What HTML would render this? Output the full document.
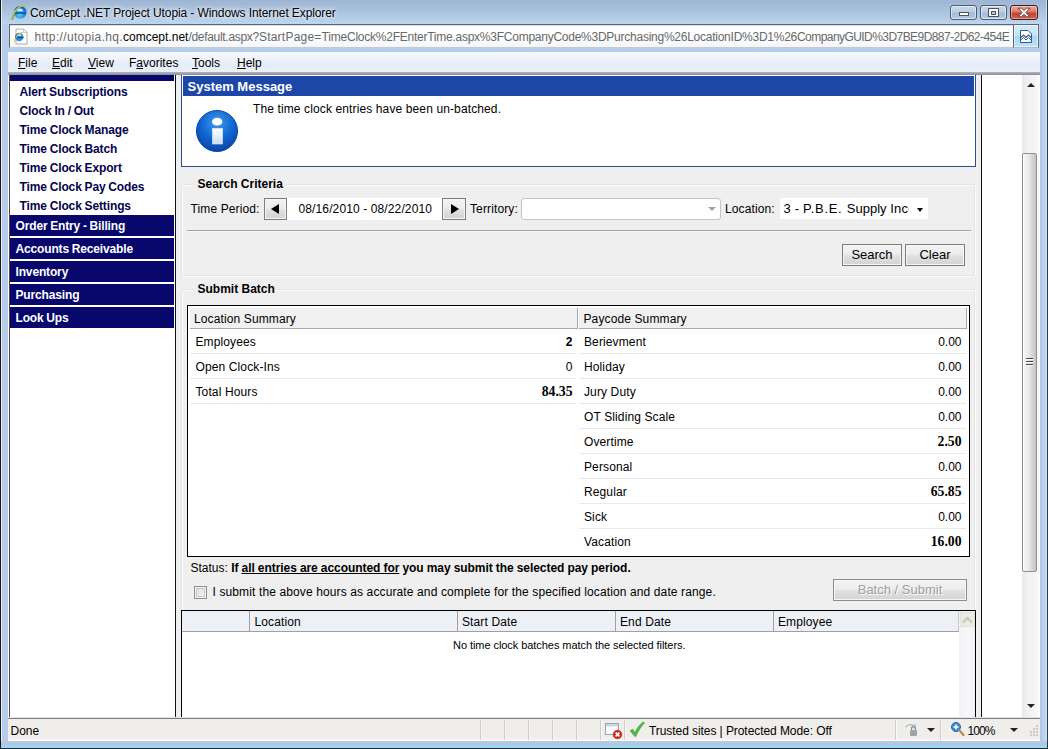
<!DOCTYPE html>
<html>
<head>
<meta charset="utf-8">
<title>ComCept .NET Project Utopia - Windows Internet Explorer</title>
<style>
html,body{margin:0;padding:0;}
body{width:1048px;height:749px;overflow:hidden;position:relative;background:#b4cbe5;font-family:"Liberation Sans",sans-serif;font-size:12px;color:#000;}
.a{position:absolute;}
.t{position:absolute;white-space:nowrap;line-height:16px;}
.b{font-weight:bold;}
/* window chrome */
#win{left:0;top:0;width:1048px;height:749px;background:linear-gradient(#9db5d2 0,#abc3de 12px,#b8d0ea 21px,#bcd6f0 23px,#b6cfea 48px,#b4cbe6 52px,#b7cde8 74px,#b9d0ea 100%);}
#edgeL{left:0;top:0;width:1px;height:749px;background:#14181c;}
#edgeL2{left:1px;top:0;width:1px;height:747px;background:#e6f2fb;}
#edgeR{left:1047px;top:0;width:1px;height:749px;background:#2c3a47;}
#edgeR2{left:1046px;top:0;width:1px;height:748px;background:#cfe6f7;}
#edgeB{left:0;top:748px;width:1048px;height:1px;background:#20282f;}
#edgeB2{left:1px;top:741px;width:1046px;height:7px;background:linear-gradient(#b6cbe0 0,#b0c8e2 60%,#92def5 80%,#8fdff6 100%);}
.ui{font-family:"Liberation Sans",sans-serif;font-size:12px;}
/* page */
#page{left:9px;top:75px;width:1030px;height:642px;background:#fff;overflow:hidden;}
.nav{position:absolute;left:11px;white-space:nowrap;font-weight:bold;font-size:12px;line-height:16px;color:#04044e;letter-spacing:-.120px;word-spacing:-.400px;}
.bar{letter-spacing:-.150px;word-spacing:-.400px;position:absolute;left:1px;width:164px;height:21px;background:#07076c;color:#fff;font-weight:bold;font-size:12px;line-height:21px;white-space:nowrap;}
.bar span{position:absolute;left:5.500px;top:1px;}
.row{position:absolute;height:1px;background:#e9e9e9;}
.c{position:absolute;white-space:nowrap;font-size:12px;line-height:16px;letter-spacing:.120px;}
.v{position:absolute;white-space:nowrap;font-size:12px;line-height:16px;text-align:right;width:60px;}
.vb{position:absolute;white-space:nowrap;font-family:"Liberation Serif",serif;font-weight:bold;font-size:13.700px;line-height:16px;text-align:right;width:60px;}
.btn{position:absolute;box-sizing:border-box;border:1px solid #7c7c7c;background:linear-gradient(#f3f3f3 0,#ececec 45%,#e0e0e0 55%,#d3d3d3 100%);box-shadow:inset 0 0 0 1px #f6f6f6;font-size:13px;line-height:20.500px;text-align:center;white-space:nowrap;}
.sep{position:absolute;top:3px;width:1px;height:20px;background:#cfcdcb;box-shadow:1px 0 0 #faf9f8;}
.fs{box-sizing:border-box;border:1px solid;border-color:#e4e4e4 #fcfcfc #fcfcfc #e4e4e4;border-radius:3px;}
.fs>div{position:absolute;left:0;top:0;right:0;bottom:0;border:1px solid;border-color:#fcfcfc #e4e4e4 #e4e4e4 #fcfcfc;border-radius:2px;}
</style>
</head>
<body>
<div id="win" class="a"></div>
<div id="edgeL2" class="a"></div><div id="edgeL" class="a"></div>
<div id="edgeR2" class="a"></div><div id="edgeR" class="a"></div>
<div id="edgeB2" class="a"></div><div id="edgeB" class="a"></div>

<!-- TITLEBAR -->
<div id="titlebar" class="a" style="left:0;top:0;width:1048px;height:24px;">
<svg class="a" style="left:9px;top:2px" width="20" height="19" viewBox="0 0 20 19">
<defs><radialGradient id="ieg" cx="0.45" cy="0.7" r="0.7"><stop offset="0" stop-color="#4fd2fa"/><stop offset="0.55" stop-color="#1f8fe0"/><stop offset="1" stop-color="#1256b0"/></radialGradient></defs>
<circle cx="11.200" cy="10.200" r="6.300" fill="url(#ieg)"/>
<path d="M5.500 10.300h11.500v1.500H5.500z" fill="#0f4fa6"/>
<path d="M8.200 9.300c.3-1.700 1.500-2.700 3-2.700s2.700 1 3 2.700z" fill="#e6f6fe" opacity=".9"/>
<path d="M17.800 3C13 .6 3.200 8 2.300 16.600c.4 1 1.500.8 1.800 0C4.300 10.500 11 3.700 17.800 3z" fill="#c9c741"/>
<path d="M2.300 16.600c.4 1 1.500.8 1.800 0 0-1.600.5-3.400 1.500-5.200" fill="none" stroke="#7a6a22" stroke-width=".7"/>
</svg>
<div id="ttl" class="t ui" style="left:30px;top:5px;font-size:12px;letter-spacing:-0.1px;color:#000;text-shadow:0 0 6px #fff,0 0 3px #e8f0f8;">ComCept .NET Project Utopia - Windows Internet Explorer</div>
<!-- caption buttons -->
<div class="a" style="left:950px;top:5px;width:27px;height:15px;border:1px solid #4d5c72;border-radius:3px;box-sizing:border-box;background:linear-gradient(#c9d8ea 0,#b9cde3 48%,#a3bbd8 52%,#b4cbe3 100%);box-shadow:inset 0 0 0 1px rgba(255,255,255,.55);"></div>
<div class="a" style="left:959px;top:12px;width:10px;height:4px;box-sizing:border-box;border:1px solid #4a5563;background:#fff;"></div>
<div class="a" style="left:980px;top:5px;width:27px;height:15px;border:1px solid #4d5c72;border-radius:3px;box-sizing:border-box;background:linear-gradient(#c9d8ea 0,#b9cde3 48%,#a3bbd8 52%,#b4cbe3 100%);box-shadow:inset 0 0 0 1px rgba(255,255,255,.55);"></div>
<div class="a" style="left:988px;top:8px;width:11px;height:9px;box-sizing:border-box;border:1px solid #4a5563;background:#fff;"></div>
<div class="a" style="left:991px;top:11px;width:5px;height:4px;box-sizing:border-box;border:1px solid #4a5563;background:#b7cbe2;"></div>
<div class="a" style="left:1010px;top:5px;width:28px;height:15px;border:1px solid #43191a;border-radius:3px;box-sizing:border-box;background:linear-gradient(#e3a79a 0,#d67b6b 48%,#c4412b 52%,#d2634a 100%);box-shadow:inset 0 0 0 1px rgba(255,255,255,.4);"></div>
<svg class="a" style="left:1017px;top:7px" width="14" height="11" viewBox="0 0 14 11"><path d="M1.200 1.200h3.400L7 3.700 9.400 1.200h3.400L8.900 5.400l3.900 4.400H9.400L7 7.200 4.600 9.800H1.200l3.900-4.400z" fill="#fff" stroke="#6a3a35" stroke-width=".9" stroke-linejoin="round"/></svg>
</div>
<!-- ADDRESSBAR -->
<div id="addrbar" class="a" style="left:9px;top:24px;width:1030px;height:25px;">
<div class="a" style="left:0;top:0;width:1005px;height:24px;box-sizing:border-box;border:1px solid #5b6670;border-bottom-color:#c3cad2;border-right:none;background:linear-gradient(#fff 40%,#f3f6f9);box-shadow:inset 0 1px 0 #dde3e9;"></div>
<div class="a" style="left:1004px;top:0;width:26px;height:24px;box-sizing:border-box;border:1px solid #5b6670;border-bottom-color:#a9bccb;background:linear-gradient(#d4ecf9 0,#c1e4f6 48%,#a5d8f2 52%,#bfe4f5 100%);box-shadow:inset 0 0 0 1px rgba(255,255,255,.6);"></div>
<svg class="a" style="left:1011px;top:6px" width="12" height="13" viewBox="0 0 12 13"><path d="M.5.500h7.500l3.500 3.500v8.500H.5z" fill="#fff" stroke="#2f5f8f" stroke-width="1"/><path d="M.8 7.500l2.700-2.500 2.500 2.500 2.500-2.500 2.700 2.500" fill="none" stroke="#2f5f8f" stroke-width="1.200"/><path d="M1 12V9.500l2.500-2 2.500 2.200 2.500-2.200 2.500 2V12z" fill="#f4fafd"/><path d="M.8 10l2.700-2.500 2.500 2.500 2.500-2.500 2.700 2.500" fill="none" stroke="#2f5f8f" stroke-width="1"/></svg>
<svg class="a" style="left:5px;top:4px" width="16" height="17" viewBox="0 0 16 17"><path d="M2 1h7.500l3.500 3.500V16H2z" fill="#fff" stroke="#b9a9a0" stroke-width="1"/><path d="M9.500 1v3.500H13" fill="none" stroke="#c9bdb6" stroke-width=".8"/><circle cx="5.200" cy="9" r="4.300" fill="#2a8fe2"/><path d="M1 8.800h8.500v1.400H1z" fill="#0f4fa6"/><path d="M3 8c.3-1.200 1.100-1.900 2.200-1.900S7.100 6.800 7.400 8z" fill="#e6f6fe" opacity=".9"/><path d="M9.800 4.200C6.500 3 .8 8 .2 13.500c.3.700 1.100.6 1.300 0C1.700 9.500 5.500 5 9.800 4.200z" fill="#d1c23c"/></svg>
<div id="adr" class="t ui" style="left:25.500px;top:5px;font-size:12px;color:#686868;"><span id="adr1" style="letter-spacing:.340px">http://utopia.hq.</span><span id="adr2" style="color:#000">comcept.net</span><span id="adr3" style="letter-spacing:-.300px">/default.aspx?<span id="q1" style="letter-spacing:.230px">StartPage=</span><span id="q2" style="letter-spacing:-.220px">TimeClock</span><span id="q3" style="letter-spacing:-.250px">%2FEnterTime.aspx%3F</span><span id="q4" style="letter-spacing:-.250px">CompanyCode%3D<span id="q4a">Purchasing%26</span><span id="q4b">LocationID%3D1%26</span></span><span id="q5" style="letter-spacing:-.560px">CompanyGUID%3D<span id="q5a">7BE9D887-2D62-454E</span></span></span></div>
</div>
<!-- MENUBAR -->
<div id="menubar" class="a" style="left:8px;top:52px;width:1032px;height:20px;background:linear-gradient(#f8fafd 0,#eef3fa 35%,#e6edf8 65%,#eaf0f9 100%);">
<div id="m1" class="t ui" style="left:10px;top:3px;"><u>F</u>ile</div>
<div id="m2" class="t ui" style="left:44px;top:3px;"><u>E</u>dit</div>
<div id="m3" class="t ui" style="left:80px;top:3px;"><u>V</u>iew</div>
<div id="m4" class="t ui" style="left:121px;top:3px;">F<u>a</u>vorites</div>
<div id="m5" class="t ui" style="left:184px;top:3px;"><u>T</u>ools</div>
<div id="m6" class="t ui" style="left:229px;top:3px;"><u>H</u>elp</div>
</div>
<div class="a" style="left:8px;top:72px;width:1032px;height:3px;background:linear-gradient(#b4b6be,#8a8c98);"></div>
<!-- PAGE -->
<div class="a" style="left:1040px;top:24px;width:6px;height:717px;background:linear-gradient(90deg,#b4c6e6 0,#b4c6e6 2px,#b5d4ee 2px,#b9d7f0 100%);"></div>
<div class="a" style="left:2px;top:24px;width:6px;height:717px;background:linear-gradient(90deg,#b9cdea 0,#b5cbe9 4px,#b7cbe6 100%);"></div>
<div id="page" class="a" style="left:8px;top:75px;width:1032px;height:642px;background:#fff;"></div>
<div id="pg" class="a" style="left:0;top:0;width:1048px;height:717px;overflow:hidden;">
<!-- sidebar -->
<div class="a" style="left:9px;top:75px;width:1px;height:642px;background:#4a4a4a;"></div>
<div class="a" style="left:10px;top:75px;width:164px;height:6px;background:#07076c;"></div>
<div id="n1" class="nav" style="left:19.500px;top:84px;">Alert Subscriptions</div>
<div id="n2" class="nav" style="left:19.500px;top:103px;">Clock In / Out</div>
<div id="n3" class="nav" style="left:19.500px;top:122px;">Time Clock Manage</div>
<div id="n4" class="nav" style="left:19.500px;top:141px;">Time Clock Batch</div>
<div id="n5" class="nav" style="left:19.500px;top:160px;">Time Clock Export</div>
<div id="n6" class="nav" style="left:19.500px;top:179px;">Time Clock Pay Codes</div>
<div id="n7" class="nav" style="left:19.500px;top:198px;">Time Clock Settings</div>
<div class="bar" style="left:10px;top:215px;"><span id="b1">Order Entry - Billing</span></div>
<div class="bar" style="left:10px;top:238px;"><span id="b2">Accounts Receivable</span></div>
<div class="bar" style="left:10px;top:261px;"><span id="b3">Inventory</span></div>
<div class="bar" style="left:10px;top:284px;"><span id="b4">Purchasing</span></div>
<div class="bar" style="left:10px;top:307px;"><span id="b5">Look Ups</span></div>
<div class="a" style="left:175px;top:75px;width:1px;height:642px;background:#111;"></div>
<!-- main frame -->
<div id="main" class="a" style="left:176px;top:75px;width:805px;height:642px;background:#efefef;"></div>
<div class="a" style="left:981px;top:75px;width:1px;height:642px;background:#111;"></div>
<!-- system message -->
<div class="a" style="left:181px;top:75px;width:795px;height:92px;box-sizing:border-box;border:1px solid #2d4f8e;border-top:none;background:#fff;"></div>
<div class="a" style="left:183px;top:76px;width:791px;height:20px;background:#1c47a8;"></div>
<div id="sm" class="t b" style="left:187.500px;top:79px;font-size:13px;color:#fff;">System Message</div>
<svg class="a" style="left:194px;top:108px" width="46" height="46" viewBox="0 0 46 46">
<defs><radialGradient id="ig" cx="0.5" cy="0.3" r="0.75"><stop offset="0" stop-color="#3f9bf0"/><stop offset="0.55" stop-color="#0f63cf"/><stop offset="1" stop-color="#0a3f9e"/></radialGradient>
<linearGradient id="ig2" x1="0" y1="0" x2="0" y2="1"><stop offset="0" stop-color="#fff"/><stop offset="1" stop-color="#c9dcf2"/></linearGradient></defs>
<circle cx="23" cy="23" r="20.500" fill="url(#ig)" stroke="#0b47a6" stroke-width="1"/>
<ellipse cx="23.200" cy="13.700" rx="5.200" ry="3.900" fill="#fff"/>
<rect x="18.500" y="20.500" width="10" height="15.500" fill="url(#ig2)" stroke="#e8f0fb" stroke-width=".6"/>
</svg>
<div id="msg" class="c" style="left:253px;top:101px;">The time clock entries have been un-batched.</div>
<!-- fieldset 1 -->
<div class="a fs" style="left:181px;top:184px;width:795px;height:93px;"><div></div></div>
<div class="a" style="left:193px;top:178px;width:93px;height:12px;background:#efefef;"></div>
<div id="lg1" class="t b" style="left:197.500px;top:175.500px;">Search Criteria</div>
<div id="tp" class="c" style="left:190.500px;top:201px;">Time Period:</div>
<div class="a" style="left:287px;top:198px;width:156px;height:22px;background:#fff;"></div>
<div class="btn" style="left:264px;top:198px;width:23px;height:22px;"></div>
<div class="a" style="left:271px;top:204px;width:0;height:0;border:5px solid transparent;border-right:8px solid #000;border-left:none;"></div>
<div id="dt" class="c" style="left:298.500px;top:201px;">08/16/2010 - 08/22/2010</div>
<div class="btn" style="left:442px;top:198px;width:24px;height:22px;"></div>
<div class="a" style="left:451px;top:204px;width:0;height:0;border:5px solid transparent;border-left:8px solid #000;border-right:none;"></div>
<div id="ter" class="c" style="left:470px;top:201px;">Territory:</div>
<div class="a" style="left:521px;top:198px;width:200px;height:22px;box-sizing:border-box;border:1px solid #c4c4c4;border-radius:3px;background:#fff;"></div>
<div class="a" style="left:708px;top:207px;width:0;height:0;border:4px solid transparent;border-top:4px solid #a0a0a0;border-bottom:none;"></div>
<div id="loc" class="c" style="left:725px;top:201px;">Location:</div>
<div class="a" style="left:780px;top:198px;width:148px;height:21px;background:#fff;"></div>
<div id="sel" class="c" style="left:783.500px;top:201px;font-size:13px;letter-spacing:.180px;width:125.500px;overflow:hidden;"><span id="s1">3 - </span><span id="s2" style="letter-spacing:.700px">P.B.E. </span><span id="s3" style="letter-spacing:.030px">Supply </span><span id="s4">Incorporated</span></div>
<div class="a" style="left:917px;top:208px;width:0;height:0;border:3.500px solid transparent;border-top:4px solid #000;border-bottom:none;"></div>
<div class="a" style="left:187px;top:230px;width:784px;height:1px;background:#a6a6a6;"></div>
<div class="a" style="left:187px;top:231px;width:784px;height:1px;background:#f6f6f6;"></div>
<div id="bs" class="btn" style="left:842px;top:244px;width:60px;height:22px;">Search</div>
<div id="bc" class="btn" style="left:905px;top:244px;width:60px;height:22px;">Clear</div>
<!-- fieldset 2 -->
<div class="a fs" style="left:181px;top:289px;width:795px;height:441px;"><div></div></div>
<div class="a" style="left:193px;top:283px;width:83px;height:12px;background:#efefef;"></div>
<div id="lg2" class="t b" style="left:197.500px;top:280.500px;">Submit Batch</div>
<div class="a" style="left:187px;top:305px;width:783px;height:252px;box-sizing:border-box;border:1px solid #000;background:#fff;"></div>
<div class="a" style="left:190px;top:308px;width:387px;height:20px;background:#f0f0f0;border-right:1px solid #a8a8a8;border-bottom:1px solid #a8a8a8;"></div>
<div class="a" style="left:579px;top:308px;width:387px;height:20px;background:#f0f0f0;border-right:1px solid #a8a8a8;border-bottom:1px solid #a8a8a8;"></div>
<div id="h1" class="c" style="left:194px;top:310.500px;">Location Summary</div>
<div id="h2" class="c" style="left:583.500px;top:310.500px;">Paycode Summary</div>
<div id="l0" class="c" style="left:195.500px;top:333.5px;">Employees</div>
<div id="lv0" class="v b" style="left:512.5px;top:333.5px;">2</div>
<div class="row" style="left:190px;top:353px;width:386px;"></div>
<div id="l1" class="c" style="left:195.500px;top:358.5px;">Open Clock-Ins</div>
<div id="lv1" class="v" style="left:512.5px;top:358.5px;">0</div>
<div class="row" style="left:190px;top:378px;width:386px;"></div>
<div id="l2" class="c" style="left:195.500px;top:383.5px;">Total Hours</div>
<div id="lv2" class="vb" style="left:512.5px;top:383.5px;">84.35</div>
<div class="row" style="left:190px;top:403px;width:386px;"></div>
<div id="r0" class="c" style="left:584px;top:333.5px;">Berievment</div>
<div id="rv0" class="v" style="left:901.5px;top:333.5px;">0.00</div>
<div class="row" style="left:579px;top:353px;width:387px;"></div>
<div id="r1" class="c" style="left:584px;top:358.5px;">Holiday</div>
<div id="rv1" class="v" style="left:901.5px;top:358.5px;">0.00</div>
<div class="row" style="left:579px;top:378px;width:387px;"></div>
<div id="r2" class="c" style="left:584px;top:383.5px;">Jury Duty</div>
<div id="rv2" class="v" style="left:901.5px;top:383.5px;">0.00</div>
<div class="row" style="left:579px;top:403px;width:387px;"></div>
<div id="r3" class="c" style="left:584px;top:408.5px;">OT Sliding Scale</div>
<div id="rv3" class="v" style="left:901.5px;top:408.5px;">0.00</div>
<div class="row" style="left:579px;top:428px;width:387px;"></div>
<div id="r4" class="c" style="left:584px;top:433.5px;">Overtime</div>
<div id="rv4" class="vb" style="left:901.5px;top:433.5px;">2.50</div>
<div class="row" style="left:579px;top:453px;width:387px;"></div>
<div id="r5" class="c" style="left:584px;top:458.5px;">Personal</div>
<div id="rv5" class="v" style="left:901.5px;top:458.5px;">0.00</div>
<div class="row" style="left:579px;top:478px;width:387px;"></div>
<div id="r6" class="c" style="left:584px;top:483.5px;">Regular</div>
<div id="rv6" class="vb" style="left:901.5px;top:483.5px;">65.85</div>
<div class="row" style="left:579px;top:503px;width:387px;"></div>
<div id="r7" class="c" style="left:584px;top:508.5px;">Sick</div>
<div id="rv7" class="v" style="left:901.5px;top:508.5px;">0.00</div>
<div class="row" style="left:579px;top:528px;width:387px;"></div>
<div id="r8" class="c" style="left:584px;top:533.5px;">Vacation</div>
<div id="rv8" class="vb" style="left:901.5px;top:533.5px;">16.00</div>

<div id="st" class="c" style="left:190.500px;top:559.500px;"><span id="st1" style="letter-spacing:0">Status: </span><b id="st2" style="letter-spacing:-.050px;word-spacing:-.200px">If <u id="st3">all entries are accounted for</u> you may submit the selected pay period.</b></div>
<div class="a" style="left:194px;top:586px;width:13px;height:13px;box-sizing:border-box;border:1px solid #8e8f8f;background:linear-gradient(135deg,#dcdcdc,#f6f6f6);box-shadow:inset 0 0 0 1px #f4f4f4, inset 0 0 0 2px #c9c9c9;"></div>
<div id="cb" class="c" style="left:212.500px;top:583.500px;">I submit the above hours as accurate and complete for the specified location and date range.</div>
<div id="bb" class="btn" style="left:833px;top:579px;width:134px;height:22px;color:#a0a0a0;text-shadow:1px 1px 0 #fff;border-color:#8c8c8c;">Batch / Submit</div>
<!-- grid -->
<div class="a" style="left:181px;top:610px;width:795px;height:120px;box-sizing:border-box;border:1px solid #000;background:#fff;"></div>
<div class="a" style="left:182px;top:611px;width:776px;height:20px;background:#edf1f6;border-bottom:1px solid #a0a0a0;border-right:1px solid #c8c8c8;"></div>
<div class="a" style="left:249px;top:611px;width:1px;height:20px;background:#a0a0a0;"></div>
<div class="a" style="left:457px;top:611px;width:1px;height:20px;background:#a0a0a0;"></div>
<div class="a" style="left:615px;top:611px;width:1px;height:20px;background:#a0a0a0;"></div>
<div class="a" style="left:773px;top:611px;width:1px;height:20px;background:#a0a0a0;"></div>
<div id="g1" class="c" style="left:254.500px;top:614px;">Location</div>
<div id="g2" class="c" style="left:462px;top:614px;">Start Date</div>
<div id="g3" class="c" style="left:620px;top:614px;">End Date</div>
<div id="g4" class="c" style="left:778px;top:614px;">Employee</div>
<div id="nb" class="c" style="left:453px;top:637px;font-size:11px;letter-spacing:-.060px;">No time clock batches match the selected filters.</div>
<div class="a" style="left:959px;top:611px;width:16px;height:106px;background:linear-gradient(90deg,#f1f1f6,#f8f8fb 50%,#f1f1f6);"></div>
<div class="a" style="left:960px;top:612px;width:15px;height:15px;box-sizing:border-box;border:1px solid #e2e2da;background:#ebebe4;"></div>
<svg class="a" style="left:962px;top:616px" width="11" height="8" viewBox="0 0 11 8"><path d="M1 6.500l4.500-4.500 4.500 4.500" fill="none" stroke="#c4c6c2" stroke-width="2"/></svg>

<div class="a" style="left:1022px;top:75px;width:17px;height:642px;background:linear-gradient(90deg,#e8e8e8 0,#f1f1f1 30%,#f4f4f4 70%,#fafafa 100%);"></div>
<div class="a" style="left:1027px;top:83px;width:0;height:0;border:4px solid transparent;border-bottom:4px solid #222;border-top:none;"></div>
<div class="a" style="left:1027px;top:704px;width:0;height:0;border:4px solid transparent;border-top:4px solid #222;border-bottom:none;"></div>
<div class="a" style="left:1022px;top:153px;width:15px;height:419px;box-sizing:border-box;border:1px solid #8f8f8f;border-radius:2px;background:linear-gradient(90deg,#f6f6f6 0,#e9e9e9 45%,#d2d2d2 75%,#c4c4c4 100%);box-shadow:inset 1px 0 0 #fff;"></div>
<div class="a" style="left:1026px;top:358px;width:7px;height:1px;background:#444;box-shadow:0 3px 0 #444,0 6px 0 #444,0 1px 0 #fff,0 4px 0 #fff,0 7px 0 #fff;"></div>

</div>
<!-- STATUSBAR -->
<div id="statusbar" class="a" style="left:8px;top:717px;width:1032px;height:24px;background:#f0eeeb;">
<div class="a" style="left:0;top:0;width:1032px;height:1px;background:#e4e4e4;"></div>
<div class="a" style="left:0;top:1px;width:1032px;height:1px;background:#7c7c7c;"></div>
<div class="a" style="left:0;top:20px;width:1032px;height:3px;background:linear-gradient(#f3eaee,#f2f7f4);"></div>
<div class="a" style="left:0;top:23px;width:1032px;height:1px;background:#fff;"></div>
<div id="done" class="t ui" style="left:2.500px;top:6px;font-size:12px;">Done</div>
<div class="sep" style="left:472px;"></div><div class="sep" style="left:496px;"></div><div class="sep" style="left:520px;"></div><div class="sep" style="left:544px;"></div><div class="sep" style="left:568px;"></div><div class="sep" style="left:592px;"></div><div class="sep" style="left:616px;"></div><div class="sep" style="left:887px;"></div><div class="sep" style="left:932px;"></div>
<svg class="a" style="left:596.500px;top:6px" width="18" height="17" viewBox="0 0 18 17"><rect x=".5" y=".5" width="13" height="11" fill="#fff" stroke="#9aa3ad"/><rect x="1" y="1" width="12" height="2.500" fill="#c9d6e6"/><circle cx="12.500" cy="11.500" r="4.300" fill="#d9261c" stroke="#8e1a13" stroke-width=".6"/><path d="M10.600 9.600l3.800 3.800M14.400 9.600l-3.800 3.800" stroke="#fff" stroke-width="1.500"/></svg>
<svg class="a" style="left:621px;top:4px" width="16" height="17" viewBox="0 0 16 17"><path d="M1 10l2.500-2 2.500 3.500C8 7 11 3 14.500 .8L15.500 2C12 5.500 9 10.500 6.500 16z" fill="#4db848" stroke="#3a9a36" stroke-width=".5"/></svg>
<div id="ts" class="t ui" style="left:641px;top:6px;font-size:12px;letter-spacing:-.070px;">Trusted sites | Protected Mode: Off</div>
<svg class="a" style="left:895px;top:4px" width="16" height="17" viewBox="0 0 16 17"><path d="M2 6c2-3 6-4 9-2l1.500-2 .5 5.500-5.500-.5 1.800-1.600C7.500 4 5 4.500 3.500 6.500z" fill="#b9bec4"/><rect x="7" y="9" width="7" height="6" rx="1" fill="#9ea4ab"/><path d="M8.500 9V7.500a2 2 0 0 1 4 0V9" fill="none" stroke="#8b9198" stroke-width="1.200"/></svg>
<div class="a" style="left:918.500px;top:11px;width:0;height:0;border:4px solid transparent;border-top:4px solid #222;border-bottom:none;"></div>
<svg class="a" style="left:942px;top:4px" width="15" height="16" viewBox="0 0 15 16"><circle cx="6" cy="6" r="4.500" fill="#3d8fd8" stroke="#2a5f9a" stroke-width="1"/><path d="M3.500 6h5M6 3.500v5" stroke="#fff" stroke-width="1.500"/><path d="M9.500 9.500l4 4.500" stroke="#b98a4a" stroke-width="2.200" stroke-linecap="round"/></svg>
<div id="zm" class="t ui" style="left:959.500px;top:6px;font-size:12px;letter-spacing:-.900px;">100%</div>
<div class="a" style="left:1001.500px;top:11px;width:0;height:0;border:4px solid transparent;border-top:4px solid #222;border-bottom:none;"></div>
<div class="a" style="left:1022px;top:14px;width:2px;height:2px;background:#c9c9c9;box-shadow:3px 0 0 #c9c9c9,6px 0 0 #c9c9c9,3px -3px 0 #c9c9c9,6px -3px 0 #c9c9c9,6px -6px 0 #c9c9c9,0 3px 0 #c9c9c9,3px 3px 0 #c9c9c9,6px 3px 0 #c9c9c9;"></div>
</div>
</body>
</html>
